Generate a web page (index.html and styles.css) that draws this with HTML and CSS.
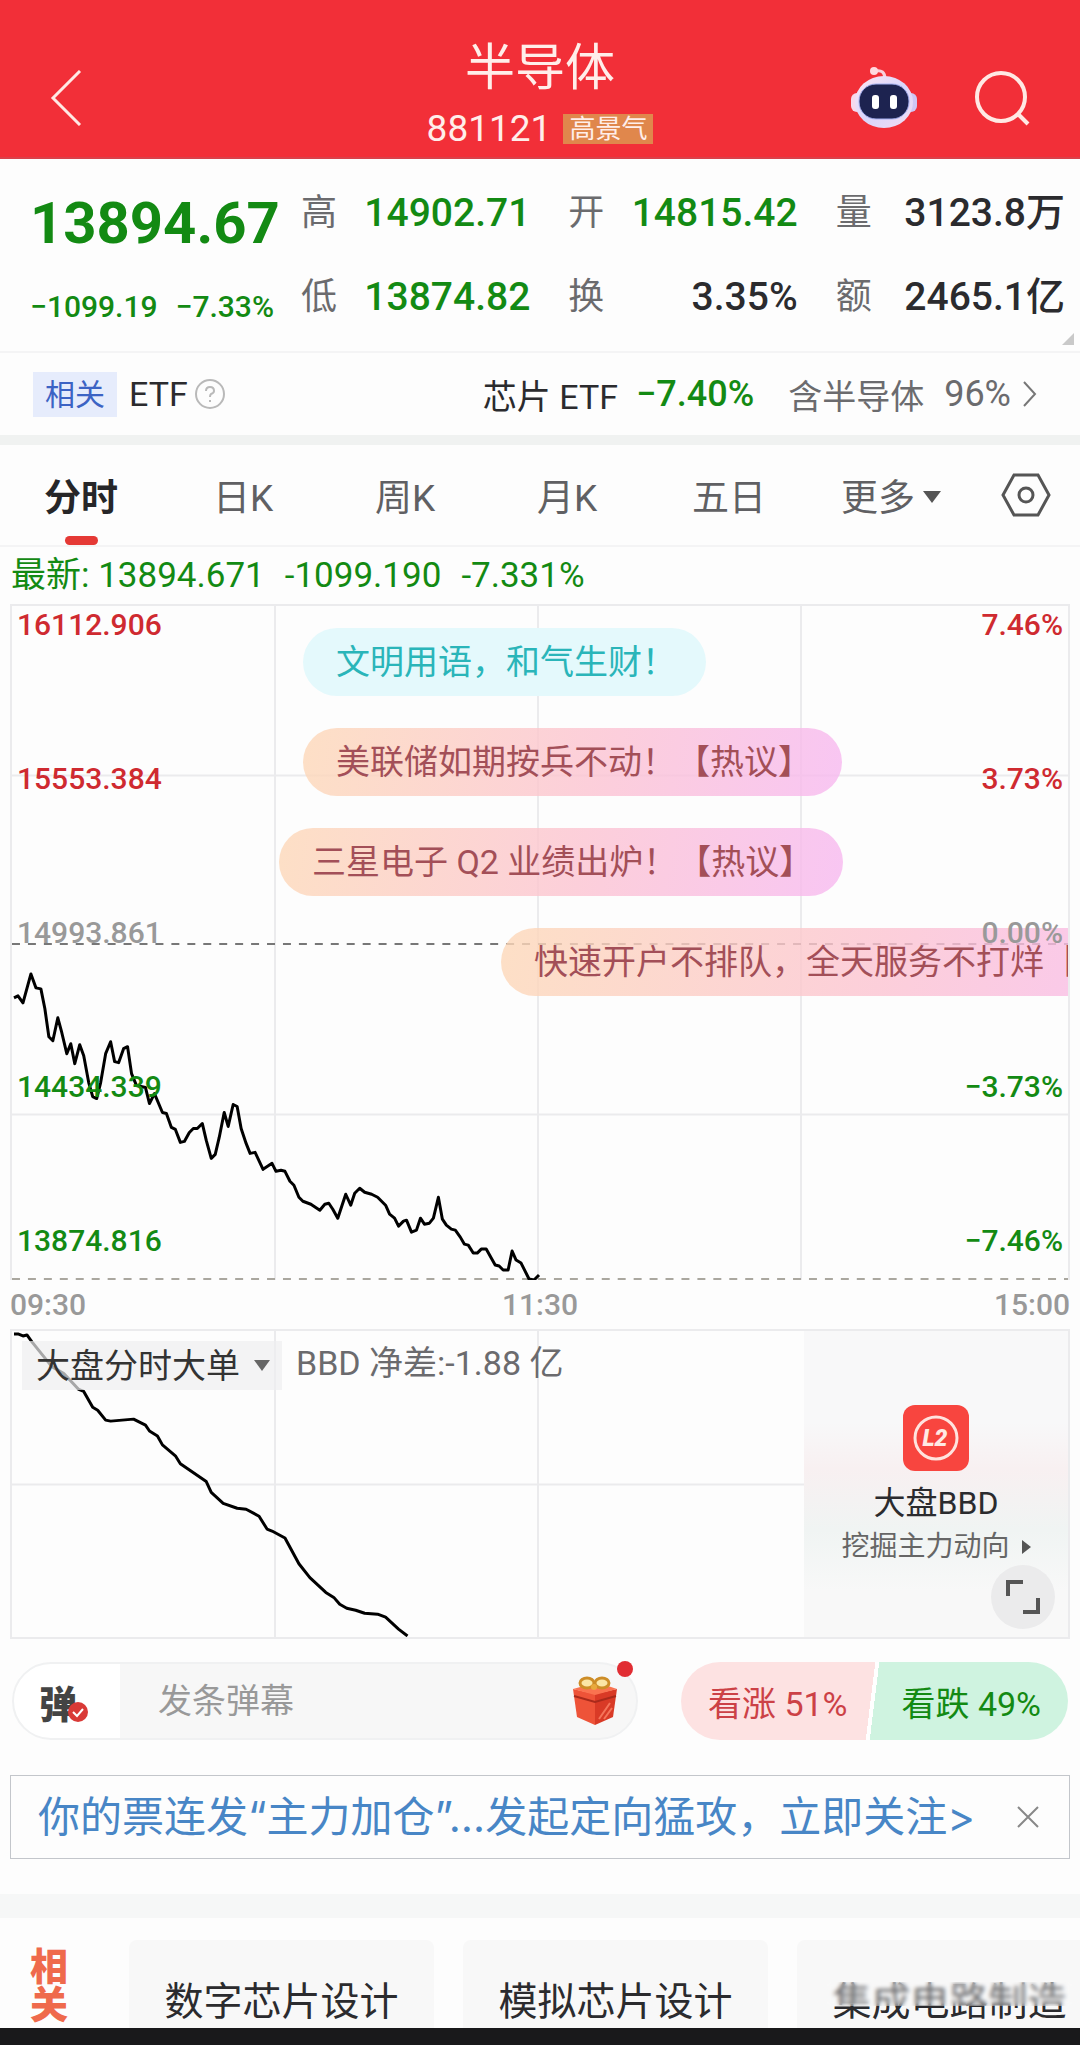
FILE: index.html
```html
<!DOCTYPE html>
<html lang="zh-CN">
<head>
    <meta charset="UTF-8">
    <meta name="viewport" content="width=device-width, initial-scale=1.0">
    <title>半导体 881121</title>
    <link rel="stylesheet" href="styles.css">
</head>
<body>
    <header class="header">
        <a href="#" class="back" aria-label="返回">
            <svg width="32" height="56" viewBox="0 0 32 56" fill="none" stroke="#ffe9e4" stroke-width="3"><path d="M30 1 L3 28 L30 55"/></svg>
        </a>
        <div class="header-title">
            <h1>半导体</h1>
            <p class="code">881121 <span class="code-tag">高景气</span></p>
        </div>
        <div class="header-actions">
            <button type="button" class="icon-btn" aria-label="智能助手">
                <svg width="68" height="64" viewBox="0 0 68 64">
                    <defs>
                        <linearGradient id="head" x1="0" y1="0" x2="1" y2="1">
                            <stop offset="0" stop-color="#ffe6f4"/>
                            <stop offset="0.5" stop-color="#d9d6fb"/>
                            <stop offset="1" stop-color="#f3dcf2"/>
                        </linearGradient>
                    </defs>
                    <path d="M25 5 Q35 3 35 13" fill="none" stroke="#f9cfdc" stroke-width="3"/>
                    <circle cx="24" cy="5" r="4" fill="#ffd9e0"/>
                    <rect x="1" y="27" width="12" height="19" rx="6" fill="#f6d9ec"/>
                    <rect x="55" y="27" width="12" height="19" rx="6" fill="#cfc6f4"/>
                    <ellipse cx="34" cy="36" rx="29" ry="26" fill="url(#head)"/>
                    <rect x="9" y="18" width="50" height="35" rx="17" fill="#1d2350" stroke="#a5b0f0" stroke-width="1"/>
                    <rect x="22" y="29" width="7" height="14" rx="3" fill="#fff"/>
                    <rect x="40" y="29" width="7" height="14" rx="3" fill="#fff"/>
                </svg>
            </button>
            <button type="button" class="icon-btn" aria-label="搜索">
                <svg width="56" height="56" viewBox="0 0 56 56" fill="none" stroke="#ffe9e4" stroke-width="4"><circle cx="27" cy="27" r="24"/><path d="M44 44 L54 54"/></svg>
            </button>
        </div>
    </header>

    <section class="quote">
        <div class="quote-main">
            <strong class="price">13894.67</strong>
            <div class="change"><span>−1099.19</span><span>−7.33%</span></div>
        </div>
        <dl class="stats">
            <div><dt>高</dt><dd class="green">14902.71</dd></div>
            <div><dt>开</dt><dd class="green">14815.42</dd></div>
            <div><dt>量</dt><dd>3123.8万</dd></div>
            <div><dt>低</dt><dd class="green">13874.82</dd></div>
            <div><dt>换</dt><dd>3.35%</dd></div>
            <div><dt>额</dt><dd>2465.1亿</dd></div>
        </dl>
        <span class="corner"></span>
    </section>

    <a href="#" class="etf">
        <span class="etf-tag">相关</span>
        <span>ETF</span>
        <svg class="help" width="32" height="32" viewBox="0 0 32 32" fill="none" stroke="#b9b9b9" stroke-width="2"><circle cx="16" cy="16" r="14"/><path d="M12 13 Q12 9 16 9 Q20 9 20 13 Q20 15 17 16 Q16 17 16 19 M16 22 V24"/></svg>
        <span class="etf-name">芯片 ETF</span>
        <span class="etf-change">−7.40%</span>
        <span class="etf-part">含半导体</span>
        <span class="etf-weight">96%</span>
        <svg class="more" width="14" height="26" viewBox="0 0 14 26" fill="none" stroke="#777" stroke-width="2"><path d="M1 1 L12 13 L1 25"/></svg>
    </a>

    <nav class="tabs">
        <button type="button" class="tab active">分时</button>
        <button type="button" class="tab">日K</button>
        <button type="button" class="tab">周K</button>
        <button type="button" class="tab">月K</button>
        <button type="button" class="tab">五日</button>
        <button type="button" class="tab tab-more">更多</button>
        <button type="button" class="settings" aria-label="设置">
            <svg width="50" height="44" viewBox="0 0 50 44" fill="none" stroke="#555" stroke-width="3"><path d="M13 2 H37 L48 22 L37 42 H13 L2 22 Z"/><circle cx="25" cy="22" r="7"/></svg>
        </button>
    </nav>

    <p class="latest"><span>最新: 13894.671</span><span>-1099.190</span><span>-7.331%</span></p>

    <main class="charts">
        <section class="chart">
            <svg class="plot" viewBox="0 0 1060 676" preserveAspectRatio="none" fill="none">
                <g stroke="#ebebed" stroke-width="2">
                    <path d="M264 0 V676 M528 0 V676 M792 0 V676"/>
                    <path d="M0 170 H1060 M0 510 H1060"/>
                </g>
                <path d="M0 339 H1060" stroke="#777" stroke-width="2" stroke-dasharray="8 8"/>
                <path d="M0 675 H1060" stroke="#aaa79f" stroke-width="2" stroke-dasharray="8 8"/>
                <polyline class="line" points="2,393 6,391 11,398 19,369 24,383 29,384 33,404 37,432 41,436 46,413 50,428 55,449 59,439 63,459 68,440 72,451 77,478 81,492 85,494 89,478 94,449 99,437 103,457 107,458 112,444 116,442 120,469 125,481 134,483 138,499 143,489 151,508 155,509 160,523 164,525 169,538 173,537 178,528 182,524 186,524 191,519 195,536 200,554 204,550 208,533 213,508 217,522 222,500 226,502 230,524 235,539 239,549 244,548 252,565 261,559 265,567 270,566 274,567 279,577 283,581 288,593 292,597 300,600 309,606 314,600 318,599 322,605 327,614 335,590 340,601 344,589 349,584 354,588 361,590 367,593 375,601 379,610 384,614 388,622 393,617 396,616 401,628 406,626 410,614 414,620 419,619 423,614 428,593 432,615 436,621 441,625 445,626 450,633 454,640 458,641 463,649 467,649 471,645 476,645 485,661 489,662 493,666 498,666 502,647 506,656 511,659 519,675 524,676 529,671"/>
            </svg>
            <ul class="danmu">
                <li class="danmu-tip">文明用语，和气生财！</li>
                <li>美联储如期按兵不动！【热议】</li>
                <li class="danmu-left">三星电子 Q2 业绩出炉！【热议】</li>
                <li class="danmu-right">快速开户不排队，全天服务不打烊【热议】</li>
            </ul>
            <div class="axis">
                <p class="red"><span>16112.906</span><span>7.46%</span></p>
                <p class="red"><span>15553.384</span><span>3.73%</span></p>
                <p class="flat"><span>14993.861</span><span>0.00%</span></p>
                <p class="green"><span>14434.339</span><span>−3.73%</span></p>
                <p class="green"><span>13874.816</span><span>−7.46%</span></p>
            </div>
        </section>
        <div class="times"><span>09:30</span><span>11:30</span><span>15:00</span></div>

        <section class="chart chart-bbd">
            <svg class="plot" viewBox="0 0 1060 309" preserveAspectRatio="none" fill="none">
                <path d="M264 0 V309 M528 0 V309 M0 155 H1060" stroke="#ebebed" stroke-width="2"/>
                <polyline class="line" points="2,3 6,3 11,5 15,4 20,11 40,36 52,43 67,59 72,61 81,77 86,80 94,90 99,91 122,89 134,95 138,101 146,106 151,115 164,126 169,134 195,152 200,163 212,174 226,179 235,180 248,187 256,200 261,202 274,209 288,235 299,249 315,264 323,269 329,276 336,280 345,282 354,285 367,286 375,289 388,301 397,308"/>
            </svg>
            <div class="bbd-bar">
                <label class="bbd-select">
                    <select aria-label="指标">
                        <option>大盘分时大单</option>
                    </select>
                </label>
                <span>BBD 净差:-1.88 亿</span>
            </div>
            <a href="#" class="promo">
                <svg width="66" height="66" viewBox="0 0 66 66">
                    <rect width="66" height="66" rx="12" fill="#f8453f"/>
                    <circle cx="33" cy="33" r="21" fill="none" stroke="#ffe3de" stroke-width="3"/>
                    <text class="l2" x="32" y="41" text-anchor="middle">L2</text>
                </svg>
                <strong>大盘BBD</strong>
                <span class="promo-sub">挖掘主力动向</span>
            </a>
            <button type="button" class="expand" aria-label="全屏">
                <svg width="34" height="34" viewBox="0 0 34 34" fill="none" stroke="#555" stroke-width="4"><path d="M2 16 V2 H17 M32 18 V32 H17"/></svg>
            </button>
        </section>
    </main>

    <section class="actions">
        <form class="post">
            <button type="button" class="post-toggle" aria-label="弹幕开关">弹
                <svg class="check" width="22" height="22" viewBox="0 0 22 22"><circle cx="11" cy="11" r="10" fill="#d93a37"/><path d="M6 11 L10 15 L16 8" fill="none" stroke="#fff" stroke-width="2"/></svg>
            </button>
            <input type="text" placeholder="发条弹幕" aria-label="发条弹幕">
            <button type="button" class="gift" aria-label="礼物">
                <svg width="46" height="50" viewBox="0 0 46 50">
                    <path d="M1 13 L23 18 V49 L5 41 Z" fill="#ee5338"/>
                    <path d="M45 13 L23 18 V49 L41 41 Z" fill="#d93a26"/>
                    <path d="M1 13 L12 10 H36 L45 13 L23 19 Z" fill="#fa7350"/>
                    <path d="M2 20 L23 26 L44 20" fill="none" stroke="#a92a1b" stroke-width="2"/>
                    <path d="M27 43 L38 27 M32 43 L40 32" stroke="#f5745a" stroke-width="2"/>
                    <ellipse cx="15" cy="7" rx="7" ry="5" fill="#fbe6a5" stroke="#cd8d27" stroke-width="3"/>
                    <ellipse cx="30" cy="7" rx="7" ry="5" fill="#fbe6a5" stroke="#cd8d27" stroke-width="3"/>
                    <circle cx="22" cy="11" r="3" fill="#e8a93c"/>
                </svg>
            </button>
            <span class="dot"></span>
        </form>
        <div class="vote">
            <button type="button" class="vote-up">看涨 51%</button>
            <button type="button" class="vote-down">看跌 49%</button>
        </div>
    </section>

    <aside class="notice">
        <a href="#">你的票连发“主力加仓”…发起定向猛攻，立即关注&gt;</a>
        <button type="button" class="icon-btn" aria-label="关闭">
            <svg width="22" height="22" viewBox="0 0 22 22" fill="none" stroke="#888" stroke-width="2"><path d="M1 1 L21 21 M21 1 L1 21"/></svg>
        </button>
    </aside>

    <section class="concepts">
        <h2>相关</h2>
        <a href="#" class="concept">数字芯片设计</a>
        <a href="#" class="concept">模拟芯片设计</a>
        <a href="#" class="concept concept-faded">集成电路制造</a>
    </section>
    <footer class="bottom-bar"></footer>
</body>
</html>
```

FILE: styles.css
```css
* {
    margin: 0;
    padding: 0;
    box-sizing: border-box;
}

body {
    background-color: #fdfdfd;
    color: #2b2b2e;
    font-family: Roboto, 'Noto Sans CJK SC', sans-serif;
    font-size: 34px;
    overflow-x: hidden;
}

a {
    color: inherit;
    text-decoration: none;
}

button,
input,
select {
    border: none;
    background: none;
    color: inherit;
    font: inherit;
    cursor: pointer;
}

svg {
    display: block;
}

.green {
    color: #138a13;
}

.red {
    color: #cf2a30;
}

.flat {
    color: #999;
}

/* Header */
.header {
    display: grid;
    grid-template-columns: 1fr auto 1fr;
    background-color: #f22f38;
    border-bottom: 2px solid #d9414a;
    color: #ffeeea;
    height: 159px;
}

.back,
.header-actions {
    display: flex;
    align-items: center;
    padding-top: 35px;
}

.back {
    padding-left: 50px;
}

.header-actions {
    justify-content: flex-end;
    gap: 56px;
    padding-right: 50px;
}

.header-title {
    padding-top: 38px;
    text-align: center;
}

.header h1 {
    font-size: 50px;
    font-weight: 400;
    line-height: 60px;
}

.code {
    display: flex;
    align-items: center;
    gap: 12px;
    font-size: 37px;
    line-height: 62px;
}

.code-tag {
    background-color: #e0874c;
    font-size: 26px;
    line-height: 30px;
    padding: 0 6px;
}

/* Quote */
.quote {
    display: grid;
    grid-template-columns: 271px 1fr;
    position: relative;
    padding: 12px 15px 7px 30px;
    border-bottom: 2px solid #f4f4f5;
    line-height: 84px;
}

.quote-main {
    padding-top: 10px;
    color: #138a13;
}

.price {
    display: block;
    font-size: 58px;
    font-weight: 700;
}

.change {
    display: flex;
    gap: 18px;
    font-size: 30px;
    font-weight: 500;
    line-height: 74px;
    padding-top: 5px;
}

.stats {
    display: grid;
    grid-template-columns: repeat(3, 1fr);
    align-content: start;
    column-gap: 38px;
}

.stats div {
    display: flex;
    justify-content: space-between;
}

.stats dt {
    color: #6b6b6e;
    font-size: 36px;
}

.stats dd {
    font-size: 39px;
    font-weight: 500;
}

.corner {
    position: absolute;
    right: 6px;
    bottom: 6px;
    border-left: 12px solid transparent;
    border-bottom: 12px solid #c9c9c9;
}

/* ETF */
.etf {
    display: flex;
    align-items: center;
    height: 82px;
    padding: 0 43px 0 33px;
}

.etf-tag {
    background-color: #e6ecfc;
    color: #3c63c4;
    font-size: 30px;
    line-height: 45px;
    padding: 0 12px;
    margin-right: 12px;
}

.help {
    margin-left: 6px;
}

.etf-name {
    margin-left: auto;
}

.etf-change {
    color: #138a13;
    font-size: 36px;
    font-weight: 500;
    margin-left: 18px;
}

.etf-part {
    color: #6b6b6e;
    margin-left: 34px;
}

.etf-weight {
    color: #6b6b6e;
    font-size: 36px;
    margin: 0 12px 0 20px;
}

/* Tabs */
.tabs {
    display: flex;
    height: 112px;
    border-top: 10px solid #f0f2f1;
    border-bottom: 2px solid #f4f4f5;
}

.tab {
    flex: 1;
    position: relative;
    color: #606063;
    font-size: 37px;
}

.tab.active {
    color: #262628;
    font-weight: 700;
}

.tab.active::after {
    content: '';
    position: absolute;
    left: 50%;
    bottom: 0;
    width: 33px;
    height: 9px;
    margin-left: -16px;
    border-radius: 5px;
    background-color: #e53935;
}

.tab-more::after {
    content: '';
    display: inline-block;
    margin-left: 8px;
    vertical-align: 8px;
    border: 9px solid transparent;
    border-top: 12px solid #555;
    border-bottom: none;
}

.settings {
    display: flex;
    align-items: center;
    justify-content: center;
    width: 108px;
}

.latest {
    display: flex;
    gap: 20px;
    padding-left: 11px;
    color: #138a13;
    line-height: 57px;
}

.latest span {
    font-size: 35px;
}

/* Charts */
.charts {
    padding: 0 10px;
}

.chart {
    display: grid;
    position: relative;
    height: 676px;
    border: 2px solid #ebebed;
    border-bottom: none;
    overflow: hidden;
}

.plot,
.danmu,
.axis,
.bbd-bar,
.promo {
    grid-area: 1 / 1;
    min-width: 0;
}

.plot {
    width: 100%;
    height: 100%;
}

.line {
    stroke: #000;
    stroke-width: 3;
    stroke-linejoin: round;
}

.danmu {
    display: flex;
    flex-direction: column;
    align-items: flex-start;
    gap: 32px;
    list-style: none;
    padding: 22px 0 0 291px;
}

.danmu li {
    border-radius: 34px;
    padding: 0 30px 0 33px;
    background: linear-gradient(100deg, rgba(253, 216, 184, 0.8), rgba(252, 195, 210, 0.8) 55%, rgba(247, 184, 240, 0.8));
    color: #a34f58;
    font-size: 34px;
    line-height: 68px;
    white-space: nowrap;
}

.danmu .danmu-tip {
    background: #e4f9fc;
    color: #2ab5b9;
}

.danmu .danmu-left {
    margin-left: -24px;
}

.danmu .danmu-right {
    margin-left: 198px;
}

.axis {
    display: flex;
    flex-direction: column;
    justify-content: space-between;
    padding: 1px 5px 21px 5px;
    font-size: 30px;
    font-weight: 500;
    line-height: 36px;
}

.axis p {
    display: flex;
    justify-content: space-between;
}

.times {
    display: flex;
    justify-content: space-between;
    color: #999;
    font-size: 30px;
    font-weight: 500;
    line-height: 49px;
}

.chart-bbd {
    height: 310px;
    border-bottom: 2px solid #ebebed;
}

.bbd-bar {
    display: flex;
    align-items: flex-start;
    align-self: start;
    gap: 14px;
    padding: 10px 0 0 10px;
    color: #6b6b6e;
    line-height: 44px;
}

.bbd-select {
    display: flex;
    align-items: center;
    background-color: rgba(238, 238, 239, 0.7);
    color: #333;
    padding: 0 12px 0 14px;
}

.bbd-select select {
    appearance: none;
    height: 49px;
}

.bbd-select::after {
    content: '';
    margin-left: 14px;
    border: 8px solid transparent;
    border-top: 11px solid #666;
    border-bottom: none;
}

.promo {
    display: flex;
    flex-direction: column;
    align-items: center;
    justify-self: end;
    width: 25%;
    padding-top: 74px;
    background: linear-gradient(#f8f8f9 30%, #f8f0f1 45%, #f0f4f3 65%, #f8f8f8 85%);
}

.l2 {
    fill: #ffe9e4;
    font-size: 23px;
    font-style: italic;
    font-weight: 900;
}

.promo strong {
    font-size: 32px;
    font-weight: 400;
    line-height: 44px;
    margin-top: 10px;
}

.promo-sub {
    display: flex;
    align-items: center;
    color: #666;
    font-size: 28px;
    line-height: 44px;
}

.promo-sub::after {
    content: '';
    margin-left: 12px;
    border: 7px solid transparent;
    border-left: 9px solid #555;
    border-right: none;
}

.expand {
    display: flex;
    align-items: center;
    justify-content: center;
    position: absolute;
    right: 13px;
    bottom: 8px;
    width: 64px;
    height: 64px;
    border-radius: 50%;
    background-color: #ebebec;
}

/* Danmu input and vote */
.actions {
    display: flex;
    gap: 43px;
    padding: 23px 12px 35px;
}

.post {
    display: flex;
    align-items: center;
    flex: 1;
    min-width: 0;
    position: relative;
    height: 78px;
    border: 2px solid #f0f1f2;
    border-radius: 39px;
    background: linear-gradient(90deg, #fff 106px, #f7f7f7 106px);
}

.post-toggle {
    position: relative;
    width: 106px;
    padding-right: 18px;
    color: #444;
    font-size: 38px;
    font-weight: 900;
}

.check {
    position: absolute;
    left: 53px;
    bottom: 6px;
}

.post input {
    flex: 1;
    min-width: 0;
    padding-left: 38px;
    outline: none;
}

.post input::placeholder {
    color: #999;
}

.gift {
    padding-right: 18px;
}

.dot {
    position: absolute;
    right: 3px;
    top: -3px;
    width: 16px;
    height: 16px;
    border-radius: 50%;
    background-color: #e12d33;
}

.vote {
    display: grid;
    grid-template-columns: 1fr 1fr;
    flex: none;
    width: 387px;
    border-radius: 39px;
    overflow: hidden;
    background: linear-gradient(97deg, #fde2e2 49%, #fff 49%, #fff 50%, #cff3e0 50%);
}

.vote-up {
    color: #cc4146;
}

.vote-down {
    color: #138a13;
}

.notice {
    display: flex;
    align-items: center;
    justify-content: space-between;
    margin: 0 10px 35px;
    padding: 0 30px 0 27px;
    border: 1px solid #c3c6cb;
    color: #4886c6;
    font-family: Inter, 'Noto Sans CJK SC', sans-serif;
    font-size: 42px;
    line-height: 82px;
    white-space: nowrap;
}

/* Related concepts */
.concepts {
    display: grid;
    grid-template-columns: 70px repeat(3, 305px);
    gap: 29px;
    height: 134px;
    padding: 22px 0 0 30px;
    border-top: 24px solid #f6f7f7;
    overflow: hidden;
}

.concepts h2 {
    color: #ef6a4c;
    font-size: 38px;
    font-weight: 900;
    line-height: 38px;
    padding-top: 8px;
}

.concept {
    position: relative;
    background-color: #f8f8f8;
    border-radius: 8px 8px 0 0;
    font-size: 39px;
    line-height: 40px;
    padding-top: 42px;
    text-align: center;
}

.concept-faded::after {
    content: '';
    position: absolute;
    left: 30px;
    right: 30px;
    top: 42px;
    height: 24px;
    background-color: rgba(248, 248, 248, 0.3);
    backdrop-filter: blur(2px);
}

.bottom-bar {
    height: 17px;
    background-color: #19191b;
}
```
